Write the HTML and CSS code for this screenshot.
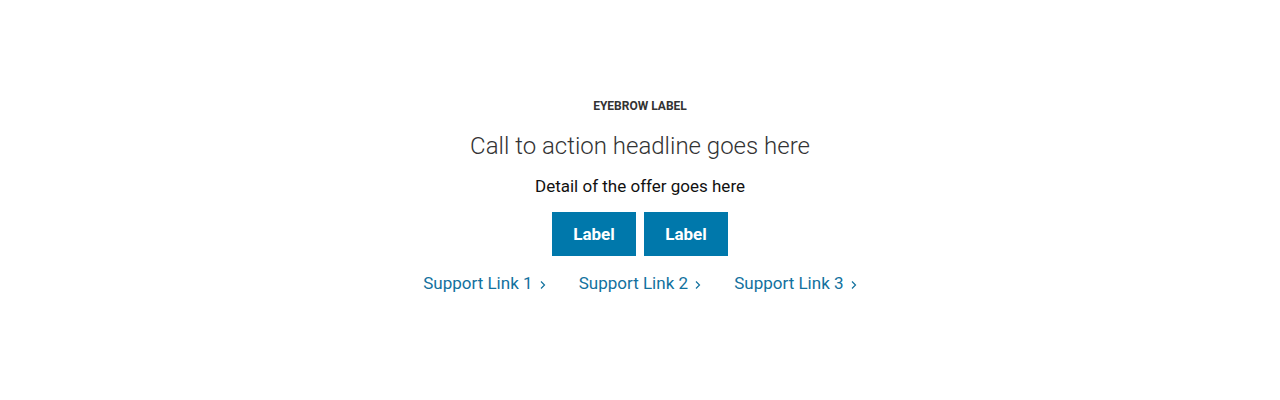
FILE: index.html
```html
<!DOCTYPE html>
<html lang="en">
<head>
  <meta charset="UTF-8" />
  <meta name="viewport" content="width=device-width, initial-scale=1.0"/>
  <title>Call to action</title>
  <link rel="stylesheet" href="styles.css">
</head>
<body>
  <div class="cta">
    <div class="eyebrow">Eyebrow label</div>
    <h2 class="headline">Call to action headline goes here</h2>
    <p class="detail">Detail of the offer goes here</p>
    <div class="buttons">
      <a class="btn" href="#">Label</a>
      <a class="btn" href="#">Label</a>
    </div>
    <div class="links">
      <a href="#">Support Link 1 <svg class="chev" width="6" height="10" viewBox="0 0 6 10"><path d="M1 1.5l3.5 3.5L1 8.5" fill="none" stroke="currentColor" stroke-width="1.2"/></svg></a>
      <a href="#">Support Link 2 <svg class="chev" width="6" height="10" viewBox="0 0 6 10"><path d="M1 1.5l3.5 3.5L1 8.5" fill="none" stroke="currentColor" stroke-width="1.2"/></svg></a>
      <a href="#">Support Link 3 <svg class="chev" width="6" height="10" viewBox="0 0 6 10"><path d="M1 1.5l3.5 3.5L1 8.5" fill="none" stroke="currentColor" stroke-width="1.2"/></svg></a>
    </div>
  </div>
</body>
</html>
```

FILE: styles.css
```css
body {
  font-family: 'Roboto', 'Liberation Sans', sans-serif;
  margin: 0;
  background: white;
  color: #161616;
}
.cta {
  display: flex;
  flex-direction: column;
  align-items: center;
  padding-top: 99px;
}
.eyebrow {
  font-size: 12px;
  font-weight: 700;
  text-transform: uppercase;
  color: #333;
  line-height: 15px;
}
.headline {
  font-size: 24px;
  font-weight: 300;
  color: #333;
  margin: 17px 0 0;
  line-height: 30px;
}
.detail {
  font-size: 17px;
  margin: 15px 0 0;
  line-height: 20px;
  color: #111;
}
.buttons {
  display: flex;
  gap: 8px;
  margin-top: 16px;
}
.btn {
  display: block;
  width: 84px;
  height: 44px;
  line-height: 44px;
  text-align: center;
  background: #0078ab;
  color: white;
  font-weight: 700;
  font-size: 17px;
  text-decoration: none;
}
.links {
  display: flex;
  gap: 33px;
  margin-top: 16px;
}
.links a {
  color: #12719e;
  text-decoration: none;
  font-size: 17px;
  line-height: 22px;
}
.chev {
  margin-left: 3px;
  vertical-align: -1px;
}
```
